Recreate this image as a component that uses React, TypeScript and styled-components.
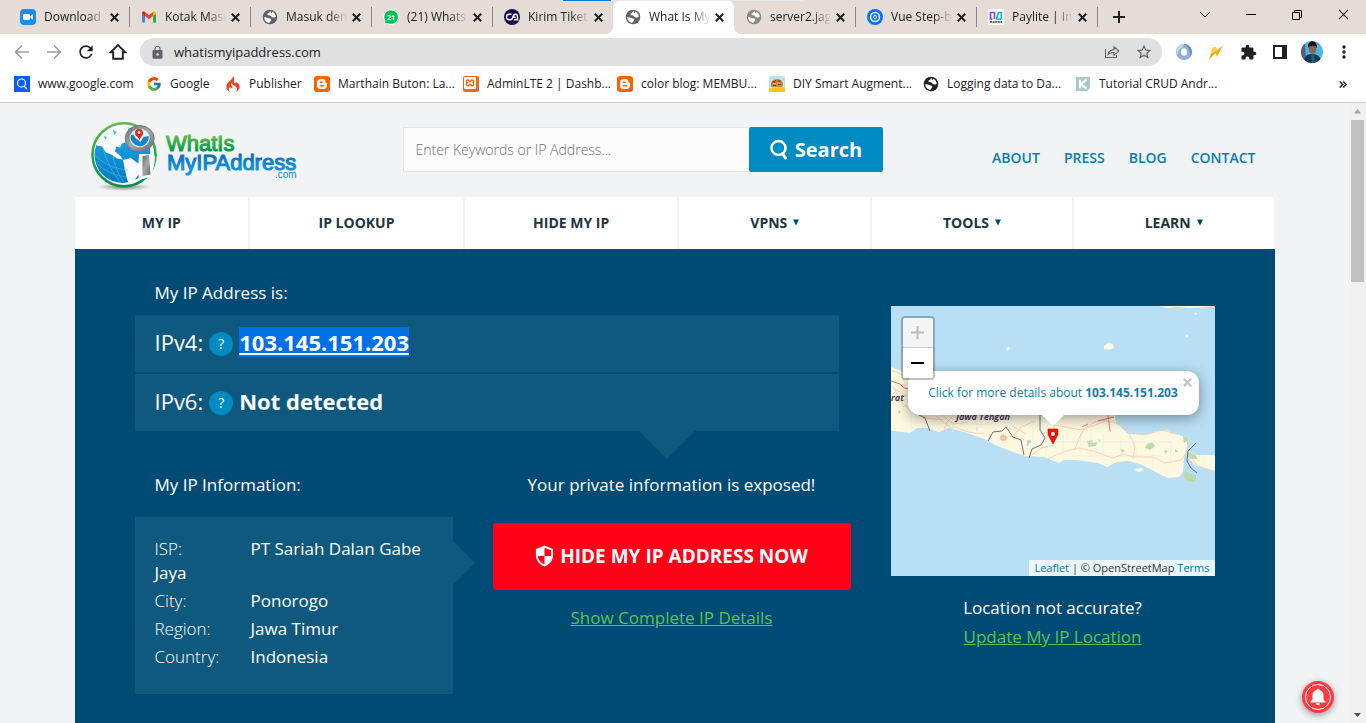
import React from "react";
import styled, { createGlobalStyle, css } from "styled-components";
import {
  MdRefresh,
  MdLock,
  MdStarBorder,
  MdExtension,
  MdMoreVert,
} from "react-icons/md";
import { FcGoogle } from "react-icons/fc";
import { SiCodeigniter, SiXampp } from "react-icons/si";

const GlobalStyle = createGlobalStyle`
  * { box-sizing: border-box; }
  body {
    margin: 0;
    font-family: "Open Sans", "Noto Sans", sans-serif;
    background: #f1f3f5;
  }
  button { font: inherit; border: 0; padding: 0; cursor: pointer; }
  ul { list-style: none; margin: 0; padding: 0; }
  p, h2 { margin: 0; }
`;

const Window = styled.div`
  display: flex;
  flex-direction: column;
  height: 100vh;
  overflow: hidden;
`;

/* ---------- Browser chrome ---------- */

const TabStrip = styled.div`
  position: relative;
  display: flex;
  flex: none;
  height: 34px;
  padding-left: 8px;
  background: #e5dbd7;
  color: #202124;
`;

const LoadingBar = styled.div`
  position: absolute;
  top: 0;
  left: 563px;
  width: 240px;
  height: 1px;
  background: linear-gradient(to right, #0b78d7 20%, #e6e6e6 20%);
`;

const Tab = styled.div<{ $active?: boolean; $divider?: boolean }>`
  position: relative;
  display: flex;
  align-items: center;
  flex: 0 1 121px;
  min-width: 0;
  height: 34px;
  padding: 0 6px 0 12px;
  border-radius: 8px 8px 0 0;
  ${(p) =>
    p.$active &&
    css`
      background: #fff;
      &::before,
      &::after {
        content: "";
        position: absolute;
        bottom: 0;
        width: 8px;
        height: 8px;
      }
      &::before {
        right: 100%;
        background: radial-gradient(circle at 0 0, transparent 8px, #fff 8px);
      }
      &::after {
        left: 100%;
        background: radial-gradient(circle at 100% 0, transparent 8px, #fff 8px);
      }
    `}
  ${(p) =>
    p.$divider &&
    css`
      &::after {
        content: "";
        position: absolute;
        right: -1px;
        top: 7px;
        width: 1px;
        height: 20px;
        background: #8a8583;
      }
    `}
`;

const TabButton = styled.button`
  display: flex;
  flex: 1;
  align-items: center;
  gap: 8px;
  min-width: 0;
  background: none;
  color: inherit;
  font-size: 12px;
  line-height: 16px;
  svg { flex: none; }
`;

const TabTitle = styled.span`
  flex: 1;
  overflow: hidden;
  white-space: nowrap;
  text-align: left;
  mask-image: linear-gradient(to right, #000 70%, transparent);
`;

const SmallButton = styled.button`
  display: grid;
  flex: none;
  place-items: center;
  width: 18px;
  height: 18px;
  background: none;
  color: #202124;
`;

const NewTab = styled(SmallButton)`
  align-self: center;
  width: 28px;
  margin-left: 8px;
`;

const WindowControls = styled.div`
  display: flex;
  margin-left: auto;
`;

const WindowButton = styled(SmallButton)`
  width: 46px;
  height: 29px;
`;

const Toolbar = styled.div`
  display: flex;
  flex: none;
  align-items: center;
  height: 36px;
  padding: 0 10px;
  background: #fff;
  color: #202124;
`;

const ToolButton = styled.button<{ $dim?: boolean }>`
  display: grid;
  flex: none;
  place-items: center;
  width: 32px;
  height: 28px;
  background: none;
  color: ${(p) => (p.$dim ? "#9b9da0" : "#202124")};
`;

const ToolGroup = styled.div<{ $end?: boolean }>`
  display: flex;
  flex: none;
  width: ${(p) => (p.$end ? "194px" : "130px")};
  padding-left: ${(p) => (p.$end ? "6px" : "0")};
  margin-left: ${(p) => (p.$end ? "0" : "-4px")};
`;

const AddressBar = styled.div`
  display: flex;
  flex: 1;
  align-items: center;
  height: 28px;
  padding: 0 2px 0 10px;
  border-radius: 14px;
  background: #e0e0e0;
  color: #5f6368;
  margin-left: 4px;
`;

const AddressInput = styled.input`
  flex: 1;
  min-width: 0;
  margin-left: 9px;
  padding: 0;
  border: 0;
  outline: 0;
  background: none;
  color: #202124;
  font-family: inherit;
  font-size: 13px;
  line-height: 20px;
`;

const BookmarkBar = styled.nav`
  display: flex;
  flex: none;
  align-items: center;
  height: 33px;
  padding: 0 14px 4px;
  border-bottom: 1px solid #cfcfcf;
  background: #fff;
`;

const Bookmark = styled.a<{ $width: number }>`
  display: flex;
  align-items: center;
  gap: 8px;
  flex: 0 1 ${(p) => p.$width}px;
  color: #202124;
  font-size: 12px;
  line-height: 16px;
  white-space: nowrap;
  text-decoration: none;
  svg { flex: none; }
`;

const MoreBookmarks = styled(SmallButton)`
  margin-left: auto;
`;

/* ---------- Page ---------- */

const Viewport = styled.div`
  display: flex;
  flex: 1;
  min-height: 0;
  background: #f1f3f5;
`;

const PageArea = styled.div`
  flex: 1;
  min-width: 0;
  overflow: hidden;
`;

const Page = styled.div`
  max-width: 1200px;
  min-height: 100%;
  margin: 0 auto;
  display: flex;
  flex-direction: column;
`;

const Scrollbar = styled.div`
  display: flex;
  flex: none;
  flex-direction: column;
  align-items: center;
  width: 17px;
  padding: 6px 0;
  background: #f1f1f1;
`;

const ScrollThumb = styled.div`
  width: 13px;
  height: 162px;
  margin: 6px 0 auto;
  background: #c1c1c1;
`;

const Header = styled.header`
  display: grid;
  grid-template-columns: 328px 480px 1fr;
  align-items: start;
  height: 94px;
`;

const LogoLink = styled.a`
  display: block;
  padding: 14px 0 0 14px;
  svg { display: block; }
`;

const SearchForm = styled.form`
  display: flex;
  height: 45px;
  margin-top: 24px;
`;

const SearchInput = styled.input`
  flex: 1;
  min-width: 0;
  padding: 0 12px;
  border: 1px solid #e3e4e5;
  border-right: 0;
  border-radius: 0;
  outline: 0;
  background: #fcfcfc;
  font-family: inherit;
  font-size: 14px;
  font-weight: 300;
  &::placeholder { color: #6f6f6f; opacity: 1; }
`;

const SearchButton = styled.button`
  display: flex;
  align-items: center;
  justify-content: center;
  gap: 6px;
  width: 134px;
  border-radius: 2px;
  background: #008bc2;
  color: #fff;
  font-size: 20px;
  font-weight: 700;
`;

const TopLinks = styled.nav`
  display: flex;
  justify-content: flex-end;
  gap: 24px;
  padding: 45px 19px 0 0;
  a {
    color: #0a7cb4;
    font-size: 14px;
    font-weight: 600;
    line-height: 20px;
    text-decoration: none;
  }
`;

const MainNav = styled.nav`
  display: grid;
  grid-template-columns: 174fr 213fr 213fr 191fr 200fr 200fr;
  gap: 2px;
  height: 52px;
  padding-right: 1px;
`;

const NavLink = styled.a`
  display: flex;
  align-items: center;
  justify-content: center;
  gap: 6px;
  padding-bottom: 1px;
  background: #fff;
  color: #22343f;
  font-size: 14px;
  font-weight: 700;
  text-decoration: none;
`;

const Hero = styled.main`
  display: grid;
  flex: 1;
  grid-template-columns: 1fr 324px;
  align-items: start;
  gap: 40px;
  padding: 32px 60px;
  background: #004b75;
  color: #fff;
`;

const LeadText = styled.h2<{ $center?: boolean }>`
  padding-left: ${(p) => (p.$center ? "0" : "20px")};
  font-size: 17px;
  font-weight: 400;
  line-height: 24px;
  text-align: ${(p) => (p.$center ? "center" : "left")};
`;

const AddressList = styled.div`
  position: relative;
  display: flex;
  flex-direction: column;
  gap: 2px;
  margin: 10px 12px 42px 0;
  &::after {
    content: "";
    position: absolute;
    top: 100%;
    right: 144px;
    border: 28px solid transparent;
    border-top-color: #10597e;
    border-bottom: 0;
  }
`;

const AddressRow = styled.div`
  display: flex;
  align-items: center;
  gap: 6px;
  height: 57px;
  padding: 0 0 4px 20px;
  background: #10597e;
  font-size: 22px;
  line-height: 30px;
  b, a { font-weight: 700; }
`;

const HelpButton = styled.button`
  width: 24px;
  height: 24px;
  margin-top: 4px;
  border-radius: 50%;
  background: #008bc2;
  color: #fff;
  font-size: 14px;
  line-height: 24px;
`;

const SelectedLink = styled.a`
  background: #0070e8;
  color: #fff;
  text-decoration: underline;
`;

const Columns = styled.div`
  display: grid;
  grid-template-columns: 318fr 358fr;
  gap: 40px;
  align-items: start;
`;

const InfoBox = styled.div`
  position: relative;
  margin-top: 20px;
  padding: 20px 20px 25px;
  background: #10597e;
  font-size: 17px;
  line-height: 24px;
  &::after {
    content: "";
    position: absolute;
    top: 24px;
    left: 100%;
    border: 22px solid transparent;
    border-left-color: #10597e;
    border-right: 0;
  }
`;

const InfoItem = styled.li`
  margin-bottom: 4px;
  font-weight: 500;
  &:last-child { margin-bottom: 0; }
`;

const InfoLabel = styled.span`
  display: inline-block;
  width: 96px;
  font-weight: 300;
`;

const HideButton = styled.button`
  display: flex;
  align-items: center;
  justify-content: center;
  gap: 6px;
  width: 100%;
  height: 67px;
  margin: 26px 0 16px;
  padding-bottom: 2px;
  border-radius: 3px;
  background: #ff0016;
  color: #fff;
  font-size: 19px;
  font-weight: 700;
`;

const GreenLink = styled.a`
  color: #5ac34e;
  font-size: 17px;
  line-height: 24px;
`;

const Centered = styled.div`
  text-align: center;
`;

const MapColumn = styled.aside`
  padding-top: 25px;
  font-size: 17px;
  line-height: 24px;
  text-align: center;
`;

const LocationText = styled.p`
  margin: 20px 0 5px;
`;

const MapCanvas = styled.div`
  position: relative;
  height: 270px;
  overflow: hidden;
  background: #b9dff5;
  > svg { display: block; }
`;

const ZoomControl = styled.div`
  position: absolute;
  top: 10px;
  left: 10px;
  border: 2px solid rgba(0, 0, 0, 0.25);
  border-radius: 4px;
  background-clip: padding-box;
`;

const ZoomButton = styled.button<{ $disabled?: boolean }>`
  display: grid;
  place-items: center;
  width: 30px;
  height: 30px;
  background: ${(p) => (p.$disabled ? "#f4f4f4" : "#fff")};
  color: ${(p) => (p.$disabled ? "#bbb" : "#000")};
  border-bottom: ${(p) => (p.$disabled ? "1px solid #ccc" : "0")};
  border-radius: ${(p) => (p.$disabled ? "2px 2px 0 0" : "0 0 2px 2px")};
`;

const Popup = styled.div`
  position: absolute;
  top: 65px;
  left: 17px;
  width: 291px;
  height: 44px;
  border-radius: 12px;
  background: #fff;
  box-shadow: 0 3px 14px rgba(0, 0, 0, 0.4);
  font-size: 12px;
  line-height: 44px;
  white-space: nowrap;
  a { color: #0f7dae; text-decoration: none; }
  &::after {
    content: "";
    position: absolute;
    top: 100%;
    left: 134px;
    border: 11px solid transparent;
    border-top-color: #fff;
    border-bottom: 0;
  }
`;

const PopupClose = styled.button`
  position: absolute;
  top: 6px;
  right: 6px;
  display: grid;
  place-items: center;
  width: 11px;
  height: 11px;
  background: none;
  color: #c3c3c3;
`;

const Attribution = styled.div`
  position: absolute;
  right: 0;
  bottom: 0;
  padding: 0 5px;
  background: rgba(255, 255, 255, 0.7);
  color: #333;
  font-size: 11px;
  line-height: 16px;
  a { color: #0078a8; text-decoration: none; }
`;

const BellButton = styled.button`
  position: fixed;
  right: 32px;
  bottom: 10px;
  width: 32px;
  height: 32px;
  border-radius: 50%;
  background: #ff3b41;
  box-shadow: 0 2px 7px rgba(0, 0, 0, 0.4);
  svg { display: block; }
`;

/* ---------- Icons ---------- */

const Cross = ({ size = 9, weight = 1.8 }: { size?: number; weight?: number }) => (
  <svg width={size} height={size} viewBox="0 0 8 8" aria-hidden="true">
    <path d="M.7.7l6.6 6.6M7.3.7L.7 7.3" stroke="currentColor" strokeWidth={weight} />
  </svg>
);

const Globe = ({ color = "#5f6368", size = 16 }: { color?: string; size?: number }) => (
  <svg width={size} height={size} viewBox="0 0 16 16" aria-hidden="true">
    <circle cx="8" cy="8" r="7.3" fill={color} />
    <path
      d="M2.100 8.300C3.500 8 5 8.300 6.200 9c1 .5 2.600.4 3 1.300.4.900-.4 1.500-.9 2.200-.3.500-.8 1-1.300 1.500C4.300 13.500 2.200 11.200 2.100 8.300z"
      fill="#fff"
    />
    <path
      d="M8.600 2.100C7.700 2.900 7.600 3.500 6.600 4c-.9.500-1.500 1-1.100 1.800.4.800 1.500.4 2.500.6 1.200.3 1.200 1.400 2.300 1.800 1.300.4 2.500.3 3.500-.2C13.700 5.300 11.900 3 9.900 2.400c.4 1 0 1.600-.6 1.500-.6-.2-.3-1.100-.7-1.800z"
      fill="#fff"
    />
  </svg>
);

const ZoomLogo = () => (
  <svg width="16" height="16" viewBox="0 0 16 16" aria-hidden="true">
    <rect width="16" height="16" rx="4" fill="#1590f5" />
    <rect x="3" y="5" width="7" height="6" rx="1.500" fill="#fff" />
    <path d="M10.500 7.200L13 5.300v5.400l-2.500-1.900z" fill="#fff" />
  </svg>
);

const GmailLogo = () => (
  <svg width="16" height="16" viewBox="0 0 16 16" aria-hidden="true">
    <path d="M1 4v9.500h3V7z" fill="#4285f4" />
    <path d="M15 4v9.500h-3V7z" fill="#34a853" />
    <path d="M1 4.200V4c0-1.500 1.600-2 2.600-1.200L4 3v4.200z" fill="#c5221f" />
    <path d="M15 4.200V4c0-1.500-1.600-2-2.600-1.200L12 3v4.200z" fill="#fbbc04" />
    <path d="M4 3l4 3.100L12 3v4.100l-4 3.100-4-3.100z" fill="#ea4335" />
  </svg>
);

const WhatsAppBadge = () => (
  <svg width="16" height="16" viewBox="0 0 16 16" aria-hidden="true">
    <path d="M8 .3a7.700 7.700 0 1 1-3.400 14.600L.6 15.500l.8-3.700A7.700 7.700 0 0 1 8 .3z" fill="#fff" />
    <path d="M8 1.200a6.800 6.800 0 1 1-3.300 12.700l-3 .6.700-2.800A6.800 6.800 0 0 1 8 1.200z" fill="#00c254" />
    <text x="8" y="10.500" textAnchor="middle" fontSize="7" fontWeight="700" fill="#fff">21</text>
  </svg>
);

const TicketLogo = () => (
  <svg width="16" height="16" viewBox="0 0 16 16" aria-hidden="true">
    <circle cx="8" cy="8" r="8" fill="#160c5b" />
    <path
      d="M7.500 5.300H5.200a2.700 2.700 0 0 0 0 5.400h1.200c1.500 0 2-1 2.500-2.700s1.300-2.700 2.500-2.700c2 0 2.200 2 2.100 2.700v2.700H10M8.900 8.200h2.800"
      fill="none"
      stroke="#fff"
      strokeWidth="1.400"
    />
  </svg>
);

const StepLogo = () => (
  <svg width="16" height="16" viewBox="0 0 16 16" aria-hidden="true">
    <circle cx="8" cy="8" r="8" fill="#0a6cff" />
    <circle cx="8" cy="8" r="4.500" fill="none" stroke="#fff" strokeWidth="1.500" />
    <circle cx="8" cy="8" r="1.600" fill="none" stroke="#fff" />
  </svg>
);

const PayliteLogo = () => (
  <svg width="16" height="16" viewBox="0 0 16 16" aria-hidden="true">
    <rect width="16" height="16" fill="#fff" />
    <path d="M2.500 10V3.500h4V10M1.500 10h3" fill="none" stroke="#8b3ff0" strokeWidth="1.700" />
    <path d="M8.500 10l2-6.500h2.800V10M8.300 10h6" fill="none" stroke="#11b9c9" strokeWidth="1.700" />
    <path d="M2 13h12" stroke="#333" strokeWidth="1.500" strokeDasharray="2 .6" />
  </svg>
);

const SearchTile = () => (
  <svg width="16" height="16" viewBox="0 0 16 16" aria-hidden="true">
    <rect width="16" height="16" fill="#0b5cff" />
    <circle cx="7.500" cy="7" r="4" fill="none" stroke="#fff" strokeWidth="1.200" />
    <path d="M10.300 10l2.500 3" stroke="#fff" strokeWidth="1.200" />
  </svg>
);

const BloggerLogo = () => (
  <svg width="16" height="16" viewBox="0 0 16 16" aria-hidden="true">
    <rect width="16" height="16" rx="3" fill="#ff6200" />
    <path
      d="M6.500 3h2.300c1.600 0 2.700 1.200 2.700 2.700 0 .8.300 1 .8 1.100.4.100.7.300.7.700v2.200c0 1.800-1.500 3.300-3.300 3.300H6.500A3.400 3.400 0 0 1 3 9.600V6.400C3 4.500 4.600 3 6.500 3z"
      fill="#fff"
    />
    <path d="M6.300 6.200h2M6.300 9.700h3.500" stroke="#ff6200" strokeWidth="1.400" strokeLinecap="round" />
  </svg>
);

const XamppTile = () => (
  <svg width="16" height="16" viewBox="0 0 16 16" aria-hidden="true">
    <rect width="16" height="16" rx="2" fill="#f2690f" />
    <SiXampp x="1" y="1" width="14" height="14" color="#fff" />
  </svg>
);

const DiyLogo = () => (
  <svg width="16" height="16" viewBox="0 0 16 16" aria-hidden="true">
    <rect width="16" height="16" rx="2" fill="#b9e4f2" />
    <path d="M2 10c-1-4 2-7 6-7 3.500 0 6 2 6 6l-1 2H3z" fill="#cf8434" />
    <path d="M3 6l4-2-1 3zM8 4l4 1-2 2zM4 9h3v1H4zM9 8h3v1H9z" fill="#7a4212" />
    <path d="M4 7.500h3M8 7h3" stroke="#f0bd7c" />
    <path d="M0 16v-3c3-2.500 6-.5 8-1.500 3-1.500 6 0 8 .5v4z" fill="#ffc413" />
  </svg>
);

const KodeLogo = () => (
  <svg width="16" height="16" viewBox="0 0 16 16" aria-hidden="true">
    <path d="M1 1h14v11l-3 3H1z" fill="#a9c8ca" />
    <path d="M5 3.500v9M11.500 3.500L6 8.200l5.500 4.300" fill="none" stroke="#fff" strokeWidth="2.200" />
  </svg>
);

const ArrowIcon = ({ back }: { back?: boolean }) => (
  <svg width="16" height="16" viewBox="0 0 16 16" aria-hidden="true">
    <path
      d={back ? "M15 8H2M8 1.500L1.500 8 8 14.500" : "M1 8h13M8 1.500L14.500 8 8 14.500"}
      fill="none"
      stroke="currentColor"
      strokeWidth="1.600"
    />
  </svg>
);

const HomeIcon = () => (
  <svg width="18" height="18" viewBox="0 0 18 18" aria-hidden="true">
    <path d="M1.800 9.200L9 2l7.200 7.200h-2.400v6.600H4.200V9.200z" fill="none" stroke="currentColor" strokeWidth="1.900" />
  </svg>
);

const ShareIcon = () => (
  <svg width="16" height="16" viewBox="0 0 16 16" aria-hidden="true">
    <path
      d="M1.500 5v8.500h11v-2.500M4 10.500c.6-3.200 2.600-4.800 6-4.900V2.800l4.800 4.300-4.800 4.200V8.500C7.500 8.400 5.700 9 4 10.500z"
      fill="none"
      stroke="#5f6368"
      strokeWidth="1.100"
    />
  </svg>
);

const RingIcon = () => (
  <svg width="18" height="18" viewBox="0 0 18 18" aria-hidden="true">
    <circle cx="9" cy="9" r="8" fill="#8fb0d2" />
    <path d="M9 1a8 8 0 0 1 6 13C16 9 14 4 9 1z" fill="#5d8cbd" />
    <path d="M2 5a8 8 0 0 1 7-4L7 5C4 6 3 8 3 12 1 10 1 7 2 5z" fill="#c3d7ea" />
    <ellipse cx="9" cy="9" rx="3" ry="3.800" fill="#fff" />
  </svg>
);

const BoltIcon = () => (
  <svg width="16" height="16" viewBox="0 0 16 16" aria-hidden="true">
    <path d="M5 3L1 15.500 8 9l.8 4L15 1 8.800 6.500 8 3z" fill="#eab010" />
    <path d="M5 3L3 9.500 8.500 7 8 3z" fill="#fbd34f" />
  </svg>
);

const SidePanelIcon = () => (
  <svg width="14" height="14" viewBox="0 0 14 14" aria-hidden="true">
    <path d="M1 1h12v12H1z" fill="none" stroke="currentColor" strokeWidth="2" />
    <path d="M9 1h4v12H9z" fill="currentColor" />
  </svg>
);

const Avatar = () => (
  <svg width="22" height="22" viewBox="0 0 22 22" aria-hidden="true">
    <defs>
      <clipPath id="avatarClip"><circle cx="11" cy="11" r="11" /></clipPath>
    </defs>
    <g clipPath="url(#avatarClip)">
      <rect width="22" height="22" fill="#4fb4e4" />
      <path d="M0 2h4l1 18H0z" fill="#5b5a78" />
      <path d="M3 22c0-6 2-9 8-9s9 3 9 9z" fill="#15384f" />
      <path d="M10 13h3l1 9h-3z" fill="#245c7b" />
      <ellipse cx="11.500" cy="8" rx="3.800" ry="5" fill="#8c6350" />
      <path d="M7 7c-1-9 10-9 9 0-2-3-7-3-9 0z" fill="#17191d" />
    </g>
  </svg>
);

const SearchIcon = () => (
  <svg width="20" height="22" viewBox="0 0 20 22" aria-hidden="true">
    <circle cx="9.500" cy="9" r="7" fill="none" stroke="#fff" strokeWidth="2.600" />
    <path d="M13.500 14.500l3 4.500" stroke="#fff" strokeWidth="3" strokeLinecap="round" />
  </svg>
);

const Caret = () => (
  <svg width="6" height="7" viewBox="0 0 6 7" aria-hidden="true">
    <path d="M0 .5h6L3 6.500z" fill="#004b75" />
  </svg>
);

const ShieldIcon = () => (
  <svg width="19" height="22" viewBox="0 0 20 22" aria-hidden="true">
    <path
      d="M10 0l9 3.500v7c0 5.300-3.800 9.700-9 11.500-5.200-1.800-9-6.200-9-11.500v-7zM10 2.200v8.800h7V4.900zM10 11H3c.4 4 3.200 7.200 7 8.800z"
      fill="#fff"
      fillRule="evenodd"
    />
  </svg>
);

const BellIcon = () => (
  <svg width="32" height="32" viewBox="0 0 32 32" aria-hidden="true">
    <circle cx="16" cy="16" r="12.500" fill="none" stroke="#fff" strokeWidth="1" />
    <path
      d="M16 7.800c.9 0 1.400.5 1.500 1.200 2.500.6 4 2.600 4 5.300v4.200l2 2.200v.8h-15v-.8l2-2.200v-4.200c0-2.700 1.500-4.700 4-5.300.1-.7.600-1.200 1.500-1.200zM14 22.300h4a2 2 0 0 1-4 0z"
      fill="#fff"
    />
  </svg>
);

const Logo = () => (
  <svg width="212" height="76" viewBox="0 0 212 76" role="img" aria-label="WhatIsMyIPAddress.com">
    <defs>
      <linearGradient id="ring" x1="0" y1="0" x2="0" y2="1">
        <stop offset="0" stopColor="#5fbb46" />
        <stop offset="1" stopColor="#009247" />
      </linearGradient>
      <linearGradient id="ocean" x1="0" y1="0" x2="0" y2="1">
        <stop offset="0" stopColor="#27aae8" />
        <stop offset="1" stopColor="#0079c5" />
      </linearGradient>
      <linearGradient id="word" x1="0" y1="0" x2="0" y2="1">
        <stop offset="0.2" stopColor="#5dba46" />
        <stop offset="0.8" stopColor="#009a4a" />
      </linearGradient>
      <linearGradient id="wordBlue" x1="0" y1="0" x2="0" y2="1">
        <stop offset="0.200" stopColor="#0b70bd" />
        <stop offset="0.800" stopColor="#1196df" />
      </linearGradient>
      <linearGradient id="metal" x1="0" y1="0" x2="1" y2="1">
        <stop offset="0" stopColor="#6e6f73" />
        <stop offset="0.500" stopColor="#a5a6a9" />
        <stop offset="1" stopColor="#646569" />
      </linearGradient>
      <radialGradient id="floor">
        <stop offset="0" stopColor="#555" stopOpacity="0.700" />
        <stop offset="1" stopColor="#555" stopOpacity="0" />
      </radialGradient>
    </defs>
    <ellipse cx="35" cy="70" rx="27" ry="4" fill="url(#floor)" />
    <circle cx="35" cy="37.700" r="31.500" fill="#f8fbfc" stroke="url(#ring)" strokeWidth="2.600" />
    <circle cx="33.500" cy="38" r="28" fill="url(#ocean)" />
    <path
      d="M7 28C11 17 20 9.500 31 9l9 1.500-3 8 2 6-6 2-2 4-4-1-1 5 5 4 3 4-6-1-6-4-5-2-4-6-5-1z"
      fill="#f6fafd"
    />
    <path d="M34 43l8-2 5 4 6 3-2 8-4 5-2 5-5 1-2-5-2-9z" fill="#f6fafd" />
    <path d="M24 13l4 2-3 3zM15 19l3 1-2 3z" fill="#57b5e6" />
    <path d="M6 38c8 8 18 14 33 15M8 47c8 7 18 12 30 13M14 31c3 12 9 24 17 34M24 40c2 10 6 18 11 26" fill="none" stroke="#63c1ec" strokeWidth="0.500" />
    <path d="M50 37h13l3 2c0 9-2 15-5 21l-11 3-1-8z" fill="#f6f8f9" />
    <path d="M53.500 39l6.500-1 1.500 19.500-8 1.500z" fill="url(#metal)" />
    <ellipse cx="50.700" cy="21.500" rx="14.500" ry="13" fill="url(#metal)" stroke="#77787c" />
    <ellipse cx="50.700" cy="21" rx="10" ry="9.300" fill="#dff1fa" />
    <path d="M41.500 20c1-3 3-4 5 1l5 4 3-5 5-1c1 4-2 8-6 10-6 1-12-3-12-9z" fill="#1287cd" />
    <path d="M50 12a4 4 0 0 1 4 4c0 3-2.500 4-3.500 7-1-3-4.500-4-4.500-7a4 4 0 0 1 4-4z" fill="#e3261d" />
    <circle cx="50" cy="15.700" r="1.400" fill="#fff" />
    <g fontFamily="Liberation Sans, sans-serif">
      <text x="77" y="34" fontSize="22" fill="url(#word)" stroke="url(#word)" strokeWidth="1.100">WhatIs</text>
      <text x="78" y="53" fontSize="22" fill="url(#wordBlue)" stroke="url(#wordBlue)" strokeWidth="1.100">MyIPAddress</text>
      <text x="186" y="61" fontSize="10" fill="#1485cb">.com</text>
    </g>
  </svg>
);

const JavaMap = () => (
  <svg width="324" height="270" viewBox="0 0 324 270" role="img" aria-label="Map of Java">
    <rect width="324" height="270" fill="#b9dff5" />
    <g fill="#fdf8e0">
      <path d="M0 61l8 3 9 5 15 7 30 5 40-8 30-4 60 3 20 12 12 25 1 8 7 6 5 5 19 1 9-4 12-1 2 3 10 2 7 4v7l-3 12-1 14-4 5-11 1-9-4-5-3-14-7-11-3-12 1-10 5-9-4-8-1-14-2-12 0-5 3-15-6-19-1-15-5-15-6-8-5-23-8-15-4-10 4-12-4-10 0-7 5-22-3z" />
      <path d="M324 149l-18 0-7-3-2 5 7 8 20 7z" />
      <path d="M213 40l4-3 5 1 1 4-5 2-5-1zM244 163l5-1 4 1-4 3-4-1zM115 42l3-2 1 3-3 2zM295 28l3 2-3 1zM304 6l2 2-2 1zM303 100l2 2-2 1zM105 38l1 2zM121 41l2 1z" />
      <path d="M268 0l8 2 10-1 12 1 18-1 8-1z" />
    </g>
    <g fill="#b9d9a5">
      <path d="M256 138l5-2 3 4-5 4-5-2zM292 131l4 0 1 4-4 2zM297 146l8 3 1 4-6 0-4-3zM294 165l6 3 5 3-1 5-8-1-3-5z" />
      <path d="M196 135l5-1 1 3 5-1-2 4-7 1zM207 133l3 2-2 1zM229 143l5 1-3 3zM273 144l4 1-3 3zM284 143l4 3-4 0zM214 125l4 3zM7 104l3 2-2 2z" />
    </g>
    <g fill="none" stroke="#dff1e4" strokeWidth="0.700">
      <path d="M190 119v28M200 120v32M212 128v20M230 130v22M245 140v14M262 148v14M280 135v24M98 126v10M142 122v26M155 126v22M172 130v18M180 150h90M150 136h130M40 118h60M20 92v32M62 112v14" />
    </g>
    <g fill="none" stroke="#fccdb2" strokeWidth="0.900" strokeLinejoin="round">
      <path d="M0 64l12 5 16 9M0 80l12 8 20 10 20 18 10 7M3 82l8 15 14 12M14 99l22 13 16 2M52 127l4-11 8-8 14 3M62 120l14 6 18 2M50 108l12 10 15-2M112 132l10-2 8-9 14-6M137 151l14-9 12-3M156 153l16-7 15-4 15 3 20 7 10-4 10 3 20 0 12 6 16-3 6-8 2-12M163 119l28 5 23-9 8 1 10 5 14 7 10 0 16-4 14 4M184 144l4-12 6-10 10-6 12-2M238 128l6 12-2 13M298 148l8 12 18 5" />
      <path d="M163 116v8l-12 4M121 120l14 8" />
    </g>
    <path d="M110 130h5v4h-5zM112 128v3" fill="#fdcfb5" stroke="#f0a888" />
    <path d="M0 75l9 3 4 4 10 1M191 121l6-3M207 115l16-4M217 109l2 16" fill="none" stroke="#ef747e" />
    <path d="M28 109l6 3 5 13M97 135l5-9 9-1 4-4 7 10 8 3 3 15M149 108v16l5 8-4 7-9 4-3 9M305 137l-8 8-1 10 4 7 6 5" fill="none" stroke="#736c7b" />
    <path d="M137 134l3 1-4 5zM86 121v4" fill="#a8d5ee" stroke="#a8d5ee" strokeWidth="0.800" />
    <g fontSize="9" fontWeight="700" fontStyle="italic" fill="#514263">
      <text x="0" y="95">rat</text>
      <text x="65" y="114">Jawa Tengah</text>
    </g>
    <path d="M157 123h9.500l.5 1v4.500l-5 9.500-5-9.500z" fill="#ee1400" stroke="#b31200" strokeWidth="0.600" />
    <circle cx="162" cy="128" r="2" fill="#fff" />
  </svg>
);

/* ---------- Data ---------- */

const tabs = [
  { title: "Download", icon: <ZoomLogo />, divider: true },
  { title: "Kotak Masuk", icon: <GmailLogo />, divider: true },
  { title: "Masuk den", icon: <Globe />, divider: true },
  { title: "(21) Whats", icon: <WhatsAppBadge />, divider: true },
  { title: "Kirim Tiket", icon: <TicketLogo /> },
  { title: "What Is My", icon: <Globe />, active: true },
  { title: "server2.jag", icon: <Globe color="#8b8784" />, divider: true },
  { title: "Vue Step-b", icon: <StepLogo />, divider: true },
  { title: "Paylite | Int", icon: <PayliteLogo />, divider: true },
];

const bookmarks = [
  { label: "www.google.com", icon: <SearchTile />, width: 132 },
  { label: "Google", icon: <FcGoogle size={16} />, width: 79 },
  { label: "Publisher", icon: <SiCodeigniter size={16} color="#ee4323" />, width: 89 },
  { label: "Marthain Buton: La...", icon: <BloggerLogo />, width: 149 },
  { label: "AdminLTE 2 | Dashb...", icon: <XamppTile />, width: 154 },
  { label: "color blog: MEMBU...", icon: <BloggerLogo />, width: 152 },
  { label: "DIY Smart Augment...", icon: <DiyLogo />, width: 154 },
  { label: "Logging data to Da...", icon: <Globe color="#202124" />, width: 152 },
  { label: "Tutorial CRUD Andr...", icon: <KodeLogo />, width: 150 },
];

const navItems = [
  { label: "MY IP" },
  { label: "IP LOOKUP" },
  { label: "HIDE MY IP" },
  { label: "VPNS", menu: true },
  { label: "TOOLS", menu: true },
  { label: "LEARN", menu: true },
];

const details = [
  ["ISP:", "PT Sariah Dalan Gabe Jaya"],
  ["City:", "Ponorogo"],
  ["Region:", "Jawa Timur"],
  ["Country:", "Indonesia"],
];

/* ---------- Sections ---------- */

const BrowserChrome = () => (
  <>
    <TabStrip>
      {tabs.map((t) => (
        <Tab key={t.title} $active={t.active} $divider={t.divider}>
          <TabButton>
            {t.icon}
            <TabTitle>{t.title}</TabTitle>
          </TabButton>
          <SmallButton aria-label={`Close ${t.title}`}><Cross /></SmallButton>
        </Tab>
      ))}
      <NewTab aria-label="New tab">
        <svg width="12" height="12" viewBox="0 0 12 12"><path d="M6 0v12M0 6h12" stroke="#202124" strokeWidth="2" /></svg>
      </NewTab>
      <WindowControls>
        <WindowButton aria-label="Search tabs">
          <svg width="12" height="8" viewBox="0 0 12 8"><path d="M1 1l5 5 5-5" fill="none" stroke="#202124" /></svg>
        </WindowButton>
        <WindowButton aria-label="Minimize">
          <svg width="10" height="1" viewBox="0 0 10 1"><path d="M0 .5h10" stroke="#000" /></svg>
        </WindowButton>
        <WindowButton aria-label="Restore">
          <svg width="10" height="10" viewBox="0 0 10 10"><path d="M.5 2.500h7v7h-7zM2.500 2.500v-2h7v7h-2" fill="none" stroke="#000" /></svg>
        </WindowButton>
        <WindowButton aria-label="Close window"><Cross size={11} weight={0.8} /></WindowButton>
      </WindowControls>
      <LoadingBar />
    </TabStrip>
    <Toolbar>
      <ToolGroup>
        <ToolButton $dim aria-label="Back"><ArrowIcon back /></ToolButton>
        <ToolButton $dim aria-label="Forward"><ArrowIcon /></ToolButton>
        <ToolButton aria-label="Reload"><MdRefresh size={20} /></ToolButton>
        <ToolButton aria-label="Home"><HomeIcon /></ToolButton>
      </ToolGroup>
      <AddressBar>
        <MdLock size={15} />
        <AddressInput aria-label="Address" defaultValue="whatismyipaddress.com" />
        <ToolButton aria-label="Share"><ShareIcon /></ToolButton>
        <ToolButton $dim aria-label="Bookmark"><MdStarBorder size={18} color="#5f6368" /></ToolButton>
      </AddressBar>
      <ToolGroup $end>
        <ToolButton aria-label="Ring extension"><RingIcon /></ToolButton>
        <ToolButton aria-label="Bolt extension"><BoltIcon /></ToolButton>
        <ToolButton aria-label="Extensions"><MdExtension size={17} /></ToolButton>
        <ToolButton aria-label="Side panel"><SidePanelIcon /></ToolButton>
        <ToolButton aria-label="Profile"><Avatar /></ToolButton>
        <ToolButton aria-label="Menu"><MdMoreVert size={20} /></ToolButton>
      </ToolGroup>
    </Toolbar>
    <BookmarkBar>
      {bookmarks.map((b) => (
        <Bookmark key={b.label} href="#" $width={b.width}>
          {b.icon}
          {b.label}
        </Bookmark>
      ))}
      <MoreBookmarks aria-label="More bookmarks">
        <svg width="8" height="7" viewBox="0 0 8 7"><path d="M.7.500l3 3-3 3M4.200.500l3 3-3 3" fill="none" stroke="#202124" strokeWidth="1.500" /></svg>
      </MoreBookmarks>
    </BookmarkBar>
  </>
);

const LocationMap = () => (
  <MapCanvas>
    <JavaMap />
    <Popup>
      <a href="#">Click for more details about <b>103.145.151.203</b></a>
      <PopupClose aria-label="Close popup"><Cross size={9} weight={2} /></PopupClose>
    </Popup>
    <ZoomControl>
      <ZoomButton $disabled aria-label="Zoom in">
        <svg width="13" height="13" viewBox="0 0 13 13"><path d="M6.500 0v13M0 6.500h13" stroke="currentColor" strokeWidth="2" /></svg>
      </ZoomButton>
      <ZoomButton aria-label="Zoom out">
        <svg width="13" height="2" viewBox="0 0 13 2"><path d="M0 1h13" stroke="currentColor" strokeWidth="2" /></svg>
      </ZoomButton>
    </ZoomControl>
    <Attribution>
      <a href="#">Leaflet</a> | © OpenStreetMap <a href="#">Terms</a>
    </Attribution>
  </MapCanvas>
);

export default function App() {
  return (
    <Window>
      <GlobalStyle />
      <BrowserChrome />
      <Viewport>
        <PageArea>
          <Page>
            <Header>
              <LogoLink href="#"><Logo /></LogoLink>
              <SearchForm>
                <SearchInput aria-label="Search" placeholder="Enter Keywords or IP Address..." />
                <SearchButton type="button"><SearchIcon />Search</SearchButton>
              </SearchForm>
              <TopLinks>
                {["ABOUT", "PRESS", "BLOG", "CONTACT"].map((l) => <a key={l} href="#">{l}</a>)}
              </TopLinks>
            </Header>
            <MainNav>
              {navItems.map((n) => (
                <NavLink key={n.label} href="#">{n.label}{n.menu && <Caret />}</NavLink>
              ))}
            </MainNav>
            <Hero>
              <section>
                <LeadText>My IP Address is:</LeadText>
                <AddressList>
                  <AddressRow>
                    <span>IPv4:</span>
                    <HelpButton>?</HelpButton>
                    <SelectedLink href="#">103.145.151.203</SelectedLink>
                  </AddressRow>
                  <AddressRow>
                    <span>IPv6:</span>
                    <HelpButton>?</HelpButton>
                    <b>Not detected</b>
                  </AddressRow>
                </AddressList>
                <Columns>
                  <div>
                    <LeadText>My IP Information:</LeadText>
                    <InfoBox>
                      <ul>
                        {details.map(([label, value]) => (
                          <InfoItem key={label}><InfoLabel>{label}</InfoLabel>{value}</InfoItem>
                        ))}
                      </ul>
                    </InfoBox>
                  </div>
                  <Centered>
                    <LeadText $center>Your private information is exposed!</LeadText>
                    <HideButton><ShieldIcon />HIDE MY IP ADDRESS NOW</HideButton>
                    <GreenLink href="#">Show Complete IP Details</GreenLink>
                  </Centered>
                </Columns>
              </section>
              <MapColumn>
                <LocationMap />
                <LocationText>Location not accurate?</LocationText>
                <GreenLink href="#">Update My IP Location</GreenLink>
              </MapColumn>
            </Hero>
          </Page>
        </PageArea>
        <Scrollbar aria-hidden="true">
          <svg width="7" height="5" viewBox="0 0 7 5"><path d="M3.500 0L7 4.500H0z" fill="#a3a3a3" /></svg>
          <ScrollThumb />
          <svg width="7" height="4" viewBox="0 0 7 4"><path d="M0 0h7L3.500 4z" fill="#505050" /></svg>
        </Scrollbar>
      </Viewport>
      <BellButton aria-label="Notifications"><BellIcon /></BellButton>
    </Window>
  );
}
